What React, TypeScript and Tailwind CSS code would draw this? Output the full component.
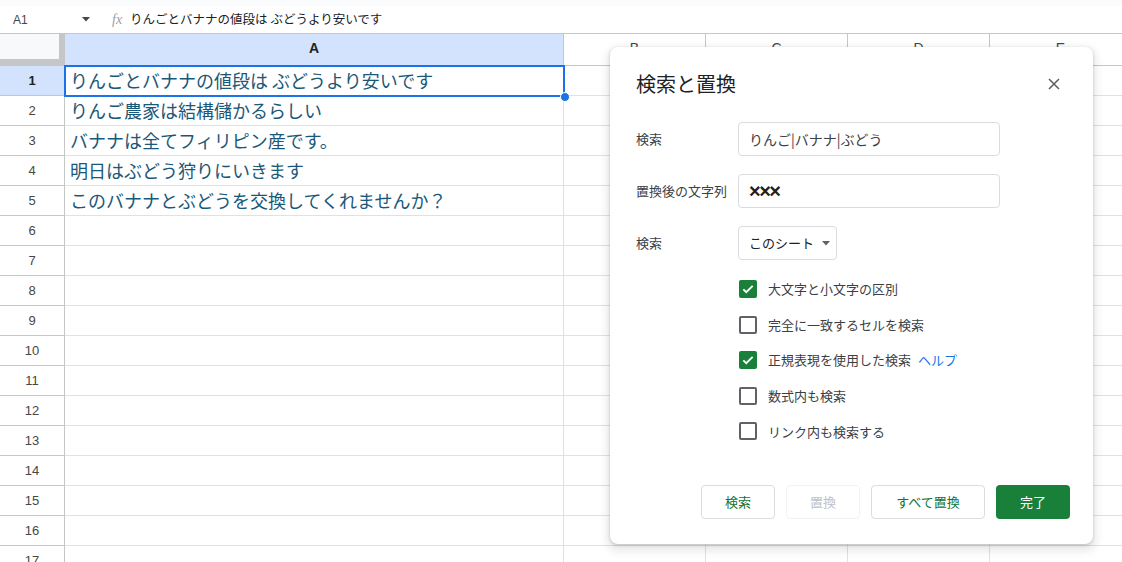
import React from 'react';

const cols = [
  { name: 'A', width: 'w-[499px]', selected: true },
  { name: 'B', width: 'w-[142px]', selected: false },
  { name: 'C', width: 'w-[142px]', selected: false },
  { name: 'D', width: 'w-[142px]', selected: false },
  { name: 'E', width: 'w-[142px]', selected: false },
];

const values = [
  'りんごとバナナの値段は ぶどうより安いです',
  'りんご農家は結構儲かるらしい',
  'バナナは全てフィリピン産です。',
  '明日はぶどう狩りにいきます',
  'このバナナとぶどうを交換してくれませんか？',
];

const rows = Array.from({ length: 17 }, (_, i) => i + 1);

const options = [
  { label: '大文字と小文字の区別', checked: true },
  { label: '完全に一致するセルを検索', checked: false },
  { label: '正規表現を使用した検索', checked: true, help: true },
  { label: '数式内も検索', checked: false },
  { label: 'リンク内も検索する', checked: false },
];

const jp = { fontFamily: '"Noto Sans CJK JP", "Liberation Sans", sans-serif' };
const num = { fontFamily: '"Liberation Sans", Arial, sans-serif' };

const Checkbox = ({ checked }: { checked: boolean }) =>
  checked ? (
    <div className="w-[18px] h-[18px] rounded-[2px] bg-[#188038] flex items-center justify-center">
      <svg width="14" height="14" viewBox="0 0 24 24">
        <path d="M4 12.5l5 5L20 6.5" fill="none" stroke="white" strokeWidth="3.2" />
      </svg>
    </div>
  ) : (
    <div className="w-[18px] h-[18px] rounded-[2px] border-2 border-[#5f6368] bg-white" />
  );

const FindReplaceDialog = () => (
  <div
    className="absolute left-[610px] top-[47px] w-[483px] h-[497px] bg-white rounded-[8px] shadow-[0_4px_8px_3px_rgba(60,64,67,0.12),0_1px_3px_rgba(60,64,67,0.25)] flex flex-col pl-[26px] pr-[23px] pt-[23px]"
    style={jp}
  >
    <div className="flex items-center justify-between h-[28px]">
      <div className="text-[20px] text-[#202124] leading-[28px]">検索と置換</div>
      <svg width="12" height="12" viewBox="0 0 12 12" className="mr-[10px]">
        <path d="M1 1l10 10M11 1L1 11" stroke="#5f6368" strokeWidth="1.6" />
      </svg>
    </div>

    <div className="flex flex-col gap-[18px] mt-[24px]">
      <div className="flex items-center">
        <div className="w-[102px] text-[13px] text-[#3c4043]">検索</div>
        <div className="w-[262px] h-[34px] border border-[#dadce0] rounded-[4px] flex items-center px-[10px] text-[14px] text-[#3c4043]">
          りんご|バナナ|ぶどう
        </div>
      </div>
      <div className="flex items-center">
        <div className="w-[102px] text-[13px] text-[#3c4043]">置換後の文字列</div>
        <div
          className="w-[262px] h-[34px] border border-[#dadce0] rounded-[4px] flex items-center px-[10px] text-[20px] text-[#202124] font-semibold tracking-[-1.5px]"
          style={num}
        >
          ×××
        </div>
      </div>
      <div className="flex items-center">
        <div className="w-[102px] text-[13px] text-[#3c4043]">検索</div>
        <div className="h-[34px] border border-[#dadce0] rounded-[4px] flex items-center pl-[10px] pr-[6px] gap-[8px] text-[13px] text-[#202124]">
          このシート
          <svg width="8" height="5" viewBox="0 0 8 5">
            <path d="M0 0h8L4 4.5z" fill="#5f6368" />
          </svg>
        </div>
      </div>
    </div>

    <div className="flex flex-col gap-[17.6px] mt-[20px] pl-[103px]">
      {options.map((o) => (
        <div key={o.label} className="flex items-center h-[18px] gap-[11px]">
          <Checkbox checked={o.checked} />
          <span className="text-[13px] text-[#3c4043]">{o.label}</span>
          {o.help && <span className="text-[13px] text-[#1a73e8] -ml-[4px]">ヘルプ</span>}
        </div>
      ))}
    </div>

    <div className="flex justify-end gap-[11px] mt-auto mb-[25px]">
      <button className="w-[74px] h-[34px] border border-[#dadce0] rounded-[4px] text-[13px] text-[#137333] bg-white">検索</button>
      <button className="w-[74px] h-[34px] border border-[#f1f3f4] rounded-[4px] text-[13px] text-[#bdc1c6] bg-white">置換</button>
      <button className="w-[114px] h-[34px] border border-[#dadce0] rounded-[4px] text-[13px] text-[#137333] bg-white">すべて置換</button>
      <button className="w-[74px] h-[34px] rounded-[4px] text-[13px] text-white bg-[#188038]">完了</button>
    </div>
  </div>
);

export default function App() {
  return (
    <div className="relative w-[1122px] h-[562px] overflow-hidden bg-white" style={jp}>
      <div className="h-[6px] bg-[#f9fbfd]" />

      {/* formula bar */}
      <div className="h-[28px] flex items-center border-b border-[#c4c7c5] bg-white">
        <div className="w-[100px] flex items-center pl-[13px] pr-[10px] justify-between">
          <span className="text-[12px] text-[#444746]" style={num}>A1</span>
          <svg width="8" height="5" viewBox="0 0 8 5">
            <path d="M0 0h8L4 4.5z" fill="#444746" />
          </svg>
        </div>
        <span className="ml-[12px] text-[14px] italic text-[#9aa0a6]" style={{ fontFamily: '"Liberation Serif", serif' }}>fx</span>
        <span className="ml-[8px] text-[12.5px] text-[#202124]">りんごとバナナの値段は ぶどうより安いです</span>
      </div>

      {/* column headers */}
      <div className="flex h-[32px] border-b border-[#c4c7c5]">
        <div className="w-[65px] shrink-0 relative bg-[#f8f9fa]">
          <div className="absolute right-0 top-0 w-[6px] h-full bg-[#c4c7c5]" />
          <div className="absolute left-0 bottom-0 w-full h-[6px] bg-[#c4c7c5]" />
        </div>
        {cols.map((c) => (
          <div
            key={c.name}
            className={`${c.width} shrink-0 border-r border-[#c4c7c5] flex items-center justify-center pb-[2px] text-[14px] ${
              c.selected ? 'bg-[#d3e3fd] font-bold text-[#202124]' : 'bg-white text-[#444746]'
            }`}
            style={num}
          >
            {c.name}
          </div>
        ))}
      </div>

      {/* rows */}
      <div className="relative">
        {rows.map((r) => (
          <div key={r} className="flex h-[30px]">
            <div
              className={`w-[65px] shrink-0 border-r border-b border-[#c4c7c5] flex items-center justify-center text-[13px] ${
                r === 1 ? 'bg-[#d3e3fd] font-bold text-[#202124]' : 'bg-white text-[#444746]'
              }`}
              style={num}
            >
              {r}
            </div>
            {cols.map((c, ci) => (
              <div
                key={c.name}
                className={`${c.width} shrink-0 border-r border-b border-[#e1e1e1] flex items-center px-[5px] text-[18px] text-[#1a5878] whitespace-nowrap`}
              >
                {ci === 0 && values[r - 1]}
              </div>
            ))}
          </div>
        ))}
        {/* A1 selection */}
        <div className="absolute left-[64px] top-[-1px] w-[501px] h-[32px] border-2 border-[#1a73e8] pointer-events-none" />
        <div className="absolute left-[561px] top-[27px] w-[8px] h-[8px] rounded-full bg-[#1a73e8] border border-white box-content -translate-x-[1px] -translate-y-[1px]" />
      </div>

      <FindReplaceDialog />
    </div>
  );
}
